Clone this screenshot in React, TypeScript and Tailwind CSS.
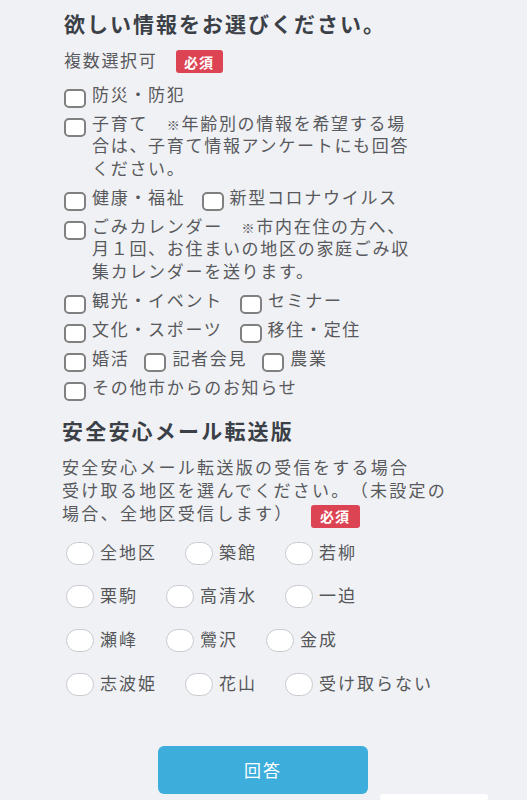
import React from "react";

const FONT = { fontFamily: '"Noto Sans CJK JP", "Noto Sans", sans-serif' };

function Box() {
  return <span className="mb-[-3px] mt-[6px] block h-[19px] w-[22px] shrink-0 rounded-[5px] border-2 border-[#808080] bg-white" />;
}

function Item({ children }: { children: React.ReactNode }) {
  return (
    <div className="flex items-start gap-[6px]">
      <Box />
      <div>{children}</div>
    </div>
  );
}

function Badge({ className = "" }: { className?: string }) {
  return (
    <span
      className={`inline-flex h-[23px] items-center justify-center rounded-[3px] bg-[#dc4454] text-[14px] font-bold leading-none tracking-[1px] text-white ${className}`}
    >
      必須
    </span>
  );
}

function Radio({ label }: { label: string }) {
  return (
    <div className="mr-[28px] flex items-center">
      <span className="block h-[23px] w-[28px] rounded-full border border-[#c8cace] bg-white" />
      <span className="mb-[4px] ml-[6px] text-[17px] leading-[23px] tracking-[2px] text-[#555759]">{label}</span>
    </div>
  );
}

function Note() {
  return <span className="text-[13px] leading-none">※</span>;
}

export default function App() {
  const radios = [
    ["全地区", "築館", "若柳"],
    ["栗駒", "高清水", "一迫"],
    ["瀬峰", "鶯沢", "金成"],
    ["志波姫", "花山", "受け取らない"],
  ];
  return (
    <div className="min-h-[800px] w-[527px] overflow-hidden bg-[#f0f1f5] [text-spacing-trim:space-all]" style={FONT}>
      <div className="pl-[64px] pt-[8px]">
        <h1 className="text-[21px] font-bold leading-[30px] tracking-[2px] text-[#3b4047]">
          欲しい情報をお選びください。
        </h1>
        <div className="mt-[12px] flex h-[23px] items-center">
          <span className="mb-[3px] text-[17px] tracking-[1.7px] text-[#58595c]">複数選択可</span>
          <Badge className="ml-[18px] w-[47px]" />
        </div>
        <div className="mt-[9.75px] flex flex-col gap-[6.5px] text-[17px] leading-[22.5px] tracking-[1.7px] text-[#58595c]">
          <Item>防災・防犯</Item>
          <Item>
            子育て　<Note />年齢別の情報を希望する場
            <br />
            合は、子育て情報アンケートにも回答
            <br />
            ください。
          </Item>
          <div className="flex gap-x-[16px]">
            <Item>健康・福祉</Item>
            <Item>新型コロナウイルス</Item>
          </div>
          <Item>
            ごみカレンダー　<Note />市内在住の方へ、
            <br />
            月１回、お住まいの地区の家庭ごみ収
            <br />
            集カレンダーを送ります。
          </Item>
          <div className="flex gap-x-[17px]">
            <Item>観光・イベント</Item>
            <Item>セミナー</Item>
          </div>
          <div className="flex gap-x-[17px]">
            <Item>文化・スポーツ</Item>
            <Item>移住・定住</Item>
          </div>
          <div className="flex gap-x-[15px]">
            <Item>婚活</Item>
            <Item>記者会見</Item>
            <Item>農業</Item>
          </div>
          <Item>その他市からのお知らせ</Item>
        </div>
      </div>

      <div className="mt-[16.75px] pl-[62px]">
        <h2 className="text-[21px] font-bold leading-[30px] tracking-[2.2px] text-[#3b4047]">
          安全安心メール転送版
        </h2>
        <div className="mt-[9.5px] text-[17px] leading-[23px] tracking-[2.3px] text-[#58595c]">
          <div>安全安心メール転送版の受信をする場合</div>
          <div>受け取る地区を選んでください。（未設定の</div>
          <div className="flex h-[23px] items-center">
            <span>場合、全地区受信します）</span>
            <Badge className="ml-[17px] w-[49px] translate-y-[4px]" />
          </div>
        </div>
      </div>

      <div className="mt-[18px] flex flex-col gap-[20.7px] pl-[66px]">
        {radios.map((row, i) => (
          <div key={i} className="flex h-[23px] items-center">
            {row.map((r) => (
              <Radio key={r} label={r} />
            ))}
          </div>
        ))}
      </div>

      <div className="mt-[50.4px] flex justify-center pr-[1px]">
        <button className="flex h-[48px] w-[210px] items-center justify-center rounded-[6px] bg-[#3daedb] text-[17px] tracking-[2px] text-white">
          回答
        </button>
      </div>
      <div className="flex">
        <div className="ml-[380px] h-[8px] w-[108px] rounded-t-[3px] bg-white" />
      </div>
    </div>
  );
}
